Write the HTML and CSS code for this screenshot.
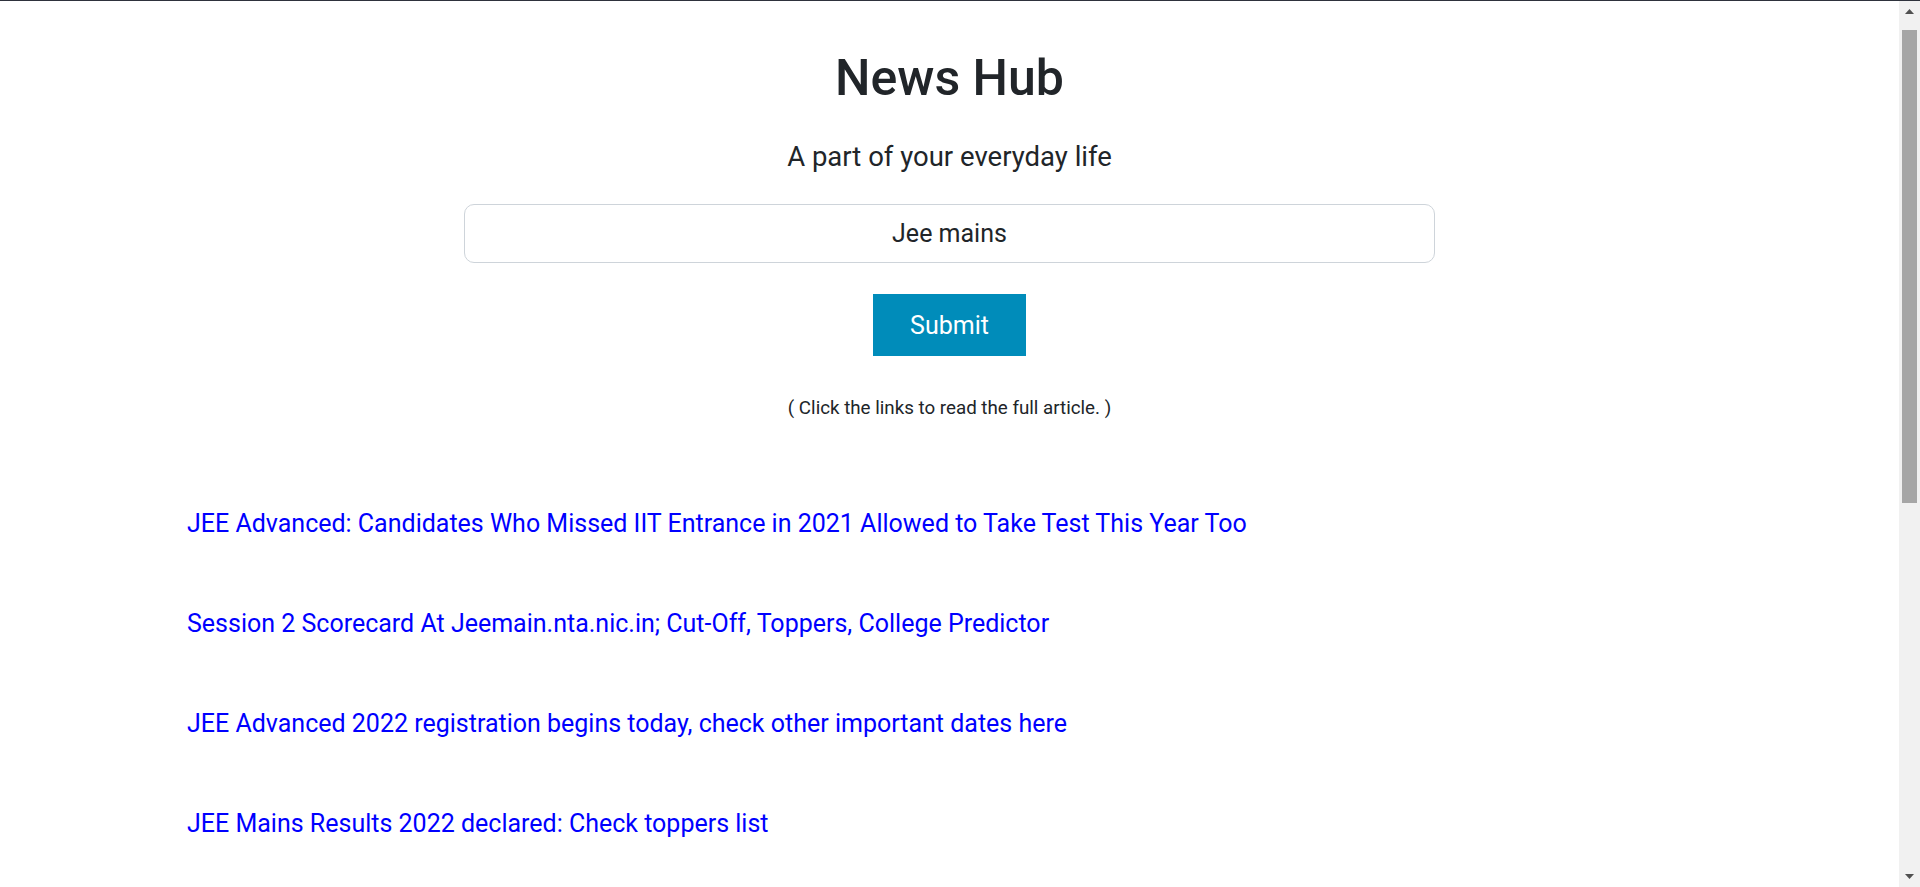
FILE: index.html
```html
<!DOCTYPE html>
<html lang="en">
<head>
<meta charset="utf-8">
<title>News Hub</title>
<link rel="stylesheet" href="styles.css">
</head>
<body>
<div class="window">
  <div class="page">
    <header class="hero">
      <h1 class="title">News Hub</h1>
      <p class="tagline">A part of your everyday life</p>
      <form class="search">
        <input class="search-input" type="text" value="Jee mains">
        <button class="submit-btn" type="button">Submit</button>
      </form>
      <p class="hint">( Click the links to read the full article. )</p>
    </header>
    <main class="articles">
      <a class="article-link" href="#">JEE Advanced: Candidates Who Missed IIT Entrance in 2021 Allowed to Take Test This Year Too</a>
      <a class="article-link" href="#">Session 2 Scorecard At Jeemain.nta.nic.in; Cut-Off, Toppers, College Predictor</a>
      <a class="article-link" href="#">JEE Advanced 2022 registration begins today, check other important dates here</a>
      <a class="article-link" href="#">JEE Mains Results 2022 declared: Check toppers list</a>
    </main>
  </div>
  <div class="scrollbar" aria-hidden="true">
    <div class="sb-button">
      <svg width="9" height="5" viewBox="0 0 9 5"><polygon points="0,5 4.5,0 9,5" fill="#505050"/></svg>
    </div>
    <div class="sb-thumb"></div>
    <div class="sb-rest"></div>
    <div class="sb-button">
      <svg width="9" height="5" viewBox="0 0 9 5"><polygon points="0,0 4.5,5 9,0" fill="#505050"/></svg>
    </div>
  </div>
</div>
</body>
</html>
```
FILE: styles.css
```css
html,
body {
  margin: 0;
  height: 100%;
  overflow: hidden;
  background: #fff;
}

body {
  box-sizing: border-box;
  border-top: 1px solid #2e323c;
  font-family: Roboto, "Liberation Sans", sans-serif;
  color: #212529;
}

.window {
  display: flex;
  height: 100%;
}

.page {
  flex: 1;
  min-width: 0;
  overflow-y: auto;
  scrollbar-width: none;
}

.page::-webkit-scrollbar {
  display: none;
}

.hero {
  display: flex;
  flex-direction: column;
  align-items: center;
  padding-top: 47px;
}

.title {
  margin: 0;
  font-size: 50px;
  font-weight: 500;
  line-height: 60px;
}

.tagline {
  margin: 28px 0 0;
  font-size: 27.5px;
  line-height: 41px;
}

.search {
  display: flex;
  flex-direction: column;
  align-items: center;
  margin-top: 27px;
}

.search-input {
  box-sizing: border-box;
  width: 971px;
  height: 59px;
  border: 1px solid #ced4da;
  border-radius: 10px;
  background: #fff;
  font-family: Roboto, "Liberation Sans", sans-serif;
  font-size: 25px;
  color: #212529;
  text-align: center;
  outline: none;
}

.submit-btn {
  margin-top: 31px;
  width: 153px;
  height: 62px;
  border: none;
  background: #008cba;
  color: #fff;
  font-family: Roboto, "Liberation Sans", sans-serif;
  font-size: 25px;
  cursor: pointer;
}

.hint {
  margin: 38px 0 0;
  font-size: 18.75px;
  line-height: 28px;
}

.articles {
  display: flex;
  flex-direction: column;
  align-items: flex-start;
  gap: 62.5px;
  padding: 83px 0 640px 187px;
}

.article-link {
  font-size: 25px;
  line-height: 37.5px;
  color: #0000ff;
  text-decoration: none;
}

.scrollbar {
  flex: none;
  width: 21px;
  display: flex;
  flex-direction: column;
  background: #f1f1f1;
}

.sb-button {
  flex: none;
  height: 21px;
  display: flex;
  align-items: center;
  justify-content: center;
}

.sb-thumb {
  flex: none;
  height: 473px;
  margin: 8px 3px 0 3px;
  background: #a6a6a6;
}

.sb-rest {
  flex: 1;
}
```
